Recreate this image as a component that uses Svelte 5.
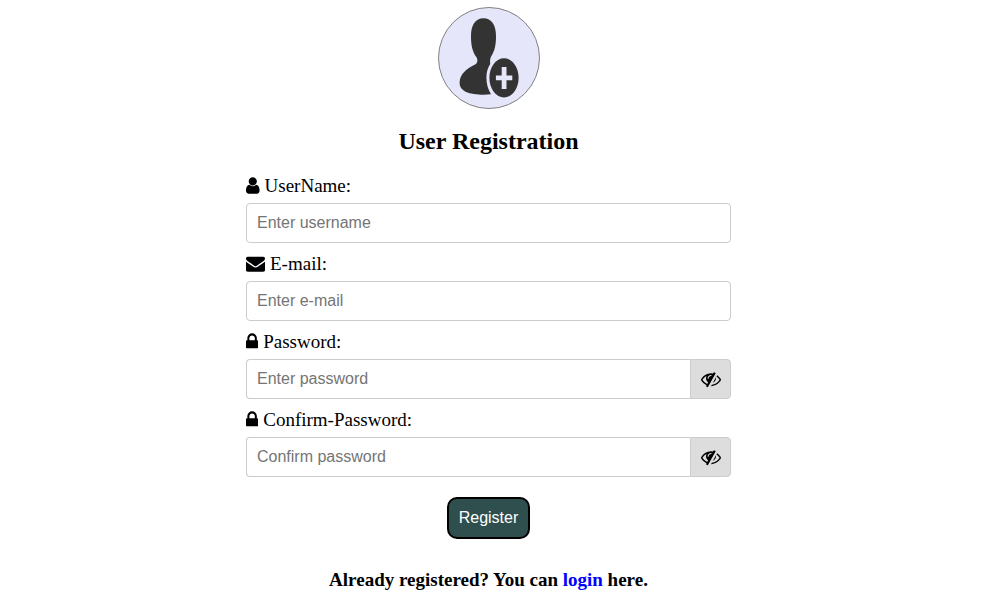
<script>
  const icons = {
    user: {
      width: 1280,
      path: 'M1280 137q0 -109 -62.5 -187t-150.5 -78h-854q-88 0 -150.5 78t-62.5 187q0 85 8.5 160.5t31.5 152t58.5 131t94 89t134.5 34.5q131 -128 313 -128t313 128q76 0 134.5 -34.5t94 -89t58.5 -131t31.5 -152t8.5 -160.5zM1024 1024q0 -159 -112.5 -271.5t-271.5 -112.5t-271.5 112.5t-112.5 271.5t112.5 271.5t271.5 112.5t271.5 -112.5t112.5 -271.5z'
    },
    envelope: {
      width: 1792,
      path: 'M1792 826v-794q0 -66 -47 -113t-113 -47h-1472q-66 0 -113 47t-47 113v794q44 -49 101 -87q362 -246 497 -345q57 -42 92.5 -65.5t94.5 -48t110 -24.5h1h1q51 0 110 24.5t94.5 48t92.5 65.5q170 123 498 345q57 39 100 87zM1792 1120q0 -79 -49 -151t-122 -123q-376 -261 -468 -325q-10 -7 -42.5 -31t-54 -38.5t-52 -32.5t-57.5 -27t-50 -9h-1h-1q-23 0 -50 9t-57.5 27t-52 32.5t-54 38.5t-42.5 31q-91 64 -262 182.5t-205 142.5q-62 42 -117 115.5t-55 136.5q0 78 41.5 130t118.5 52h1472q65 0 112.5 -47t47.5 -113z'
    },
    lock: {
      width: 1152,
      path: 'M320 768h512v192q0 106 -75 181t-181 75t-181 -75t-75 -181v-192zM1152 672v-576q0 -40 -28 -68t-68 -28h-960q-40 0 -68 28t-28 68v576q0 40 28 68t68 28h32v192q0 184 132 316t316 132t316 -132t132 -316v-192h32q40 0 68 -28t28 -68z'
    },
    eyeSlash: {
      width: 1792,
      path: 'M555 201l78 141q-87 63 -136 159t-49 203q0 121 61 225q-229 -117 -381 -353q167 -258 427 -375zM944 960q0 20 -14 34t-34 14q-125 0 -214.5 -89.5t-89.5 -214.5q0 -20 14 -34t34 -14t34 14t14 34q0 86 61 147t147 61q20 0 34 14t14 34zM1307 1151q0 -7 -1 -9q-106 -189 -316 -567t-315 -566l-49 -89q-10 -16 -28 -16q-12 0 -134 70q-16 10 -16 28q0 12 44 87q-143 65 -263.5 173t-208.5 245q-20 31 -20 69t20 69q153 235 380 371t496 136q89 0 180 -17l54 97q10 16 28 16q5 0 18 -6t31 -15.5t33 -18.5t31.5 -18.5t19.5 -11.5q16 -10 16 -27zM1344 704q0 -139 -79 -253.5t-209 -164.5l280 502q8 -45 8 -84zM1792 576q0 -35 -20 -69q-39 -64 -109 -145q-150 -172 -347.5 -267t-419.5 -95l74 132q212 18 392.5 137t301.5 307q-115 179 -282 294l63 112q95 -64 182.5 -153t144.5 -184q20 -34 20 -69z'
    }
  };

  const fields = [
    { id: 'username', label: 'UserName:', icon: 'user', type: 'text', placeholder: 'Enter username' },
    { id: 'email', label: 'E-mail:', icon: 'envelope', type: 'email', placeholder: 'Enter e-mail' },
    { id: 'password', label: 'Password:', icon: 'lock', type: 'password', placeholder: 'Enter password' },
    { id: 'confirm', label: 'Confirm-Password:', icon: 'lock', type: 'password', placeholder: 'Confirm password' }
  ];

  let shown = $state({ password: false, confirm: false });
</script>

{#snippet glyph(name)}
  <svg class="glyph" viewBox="0 -256 {icons[name].width} 1792" aria-hidden="true">
    <path transform="matrix(1 0 0 -1 0 1280)" d={icons[name].path} />
  </svg>
{/snippet}

<main>
  <svg class="avatar" viewBox="0 0 102 102" aria-hidden="true">
    <circle cx="51" cy="51" r="50.5" fill="#e6e6fa" stroke="#808080" />
    <path
      fill="#333"
      d="M45.5 11.3C53.5 11.3 58 18 58 29C58 38 56.8 43.5 53.4 49C52.2 51 51.8 53 52.2 57C50 60.5 48.4 65 48.4 70.5C48.4 77 50 82.5 53 87.3C44 88.3 33.5 87.3 28 85C23.5 82.8 21.6 79.5 21.6 75.8C21.6 67.5 28.5 61.5 37.5 57.3C39.3 56.3 40 53.5 38.8 50.8C34.2 44.5 33 38 33 29C33 18 37.5 11.3 45.5 11.3Z"
    />
    <ellipse cx="66" cy="70.8" rx="14.6" ry="19.6" fill="#333" />
    <path fill="#e6e6fa" d="M63.7 60h4.8v8.5h5.8v4.8h-5.8v8.7h-4.8v-8.7h-5.8v-4.8h5.8z" />
  </svg>

  <h2>User Registration</h2>

  <form onsubmit={(event) => event.preventDefault()}>
    {#each fields as field (field.id)}
      <label for={field.id}>{@render glyph(field.icon)}{field.label}</label>
      <div class="control">
        <input
          id={field.id}
          name={field.id}
          type={shown[field.id] ? 'text' : field.type}
          placeholder={field.placeholder}
        />
        {#if field.type === 'password'}
          <button
            class="toggle"
            type="button"
            aria-label="Show password"
            aria-pressed={shown[field.id]}
            onclick={() => (shown[field.id] = !shown[field.id])}
          >
            {@render glyph('eyeSlash')}
          </button>
        {/if}
      </div>
    {/each}
    <button class="register" type="submit">Register</button>
  </form>

  <p>Already registered? You can <a href="#login">login</a> here.</p>
</main>

<style>
  :global(body) {
    margin: 0;
    background: #fff;
  }

  main {
    display: flex;
    flex-direction: column;
    align-items: center;
    padding: 7px 28px 20px 0;
    color: #000;
    font-family: "Liberation Serif", "Times New Roman", serif;
    font-size: 19px;
    line-height: 22px;
  }

  .avatar {
    width: 102px;
    height: 102px;
  }

  h2 {
    margin: 18px 0 20px;
    font-size: 24px;
    line-height: 28px;
  }

  form {
    display: flex;
    flex-direction: column;
    width: 50%;
    min-width: 280px;
    max-width: 485px;
  }

  label {
    display: flex;
    align-items: center;
    gap: 5px;
    margin-bottom: 6px;
  }

  .glyph {
    height: 19px;
    fill: currentColor;
  }

  label :global(.glyph) {
    margin-bottom: 1px;
  }

  .control {
    display: flex;
    height: 40px;
    margin-bottom: 10px;
  }

  input {
    flex: 1;
    min-width: 0;
    box-sizing: border-box;
    margin: 0;
    padding: 0 10px;
    border: 1px solid #ccc;
    border-radius: 4px;
    background: #fff;
    font: 16px "Liberation Sans", Arial, sans-serif;
  }

  input::placeholder {
    color: #757575;
  }

  input:not(:last-child) {
    border-right: 0;
    border-radius: 4px 0 0 4px;
  }

  .toggle {
    display: flex;
    align-items: center;
    justify-content: center;
    width: 41px;
    padding: 0;
    border: 1px solid #ccc;
    border-radius: 0 4px 4px 0;
    background: #ddd;
    color: #000;
    cursor: pointer;
  }

  .toggle .glyph {
    height: 20px;
  }

  .register {
    align-self: center;
    margin: 10px 0 30px;
    padding: 10px;
    border: 2px solid #000;
    border-radius: 10px;
    background: darkslategray;
    color: #fff;
    font: 16px/18px "Liberation Sans", Arial, sans-serif;
    cursor: pointer;
  }

  p {
    margin: 0;
    font-weight: bold;
  }

  a {
    color: #00f;
    text-decoration: none;
  }
</style>
